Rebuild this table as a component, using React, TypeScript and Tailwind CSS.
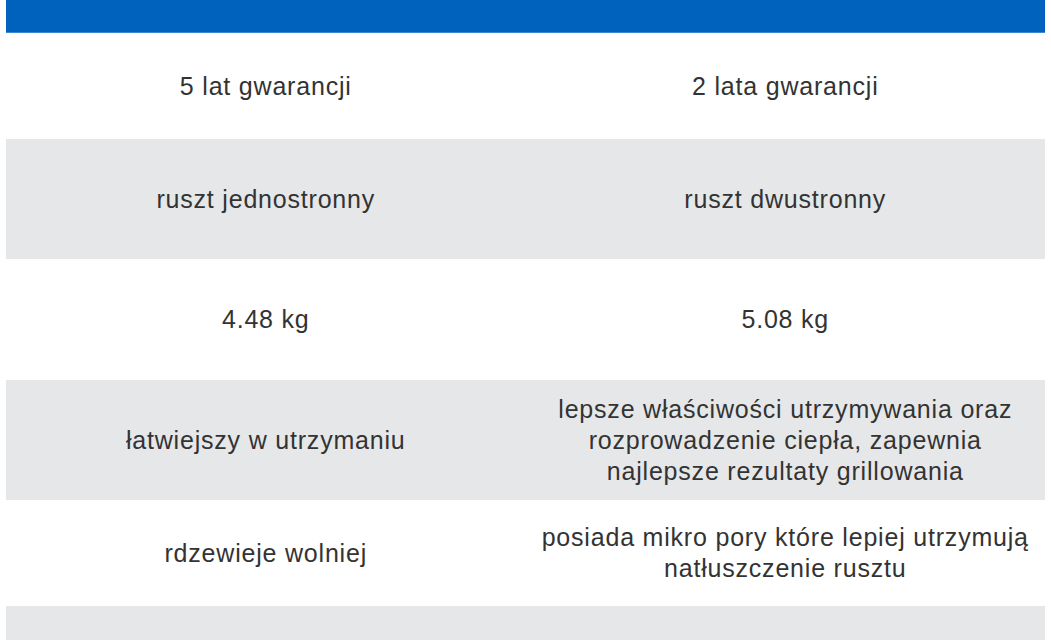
import { Fragment } from 'react'

const rows: { left: string[]; right: string[]; h: string; gray: boolean }[] = [
  { left: ['5 lat gwarancji'], right: ['2 lata gwarancji'], h: 'h-[106px]', gray: false },
  { left: ['ruszt jednostronny'], right: ['ruszt dwustronny'], h: 'h-[120px]', gray: true },
  { left: ['4.48 kg'], right: ['5.08 kg'], h: 'h-[121px]', gray: false },
  {
    left: ['łatwiejszy w utrzymaniu'],
    right: ['lepsze właściwości utrzymywania oraz', 'rozprowadzenie ciepła, zapewnia', 'najlepsze rezultaty grillowania'],
    h: 'h-[120px]',
    gray: true,
  },
  {
    left: ['rdzewieje wolniej'],
    right: ['posiada mikro pory które lepiej utrzymują', 'natłuszczenie rusztu'],
    h: 'h-[106px]',
    gray: false,
  },
  { left: [''], right: [''], h: 'h-[120px]', gray: true },
]

function Cell({ lines }: { lines: string[] }) {
  return (
    <div className="flex-1 flex items-center justify-center text-center">
      <p className="text-[25px] leading-[31px] tracking-[0.8px] text-[#333]">
        {lines.map((l, i) => (
          <Fragment key={i}>
            {i > 0 && <br />}
            {l}
          </Fragment>
        ))}
      </p>
    </div>
  )
}

export default function App() {
  return (
    <div className="h-[640px] overflow-hidden bg-white px-[6px] font-['Liberation_Sans']">
      <div className="h-[33px] bg-[#0062bd] border-b border-[#3a86d0]" />
      {rows.map((r, i) => (
        <div key={i} className={`flex ${r.h} ${r.gray ? 'bg-[#e6e7e9]' : 'bg-white'}`}>
          <Cell lines={r.left} />
          <Cell lines={r.right} />
        </div>
      ))}
    </div>
  )
}
